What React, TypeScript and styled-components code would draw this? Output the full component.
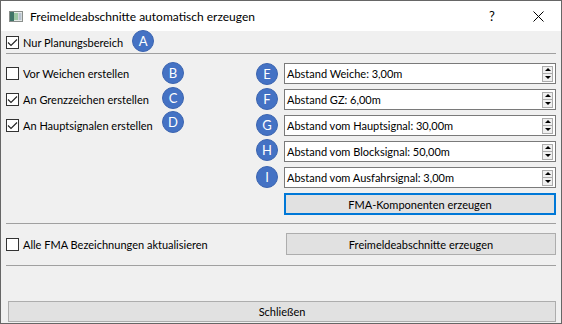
import { Fragment } from "react";
import styled, { createGlobalStyle } from "styled-components";

const GlobalStyle = createGlobalStyle`
    * { box-sizing: border-box; }
    html, body { margin: 0; padding: 0; background: #ffffff; }
    body {
        font-family: Lato, "Noto Sans", "Liberation Sans", sans-serif;
        font-size: 11px;
        color: #000000;
    }
`;

const Window = styled.div`
    width: 562px;
    height: 324px;
    border: 1px solid #666666;
    background: #f0f0f0;
    display: flex;
    flex-direction: column;
`;

const TitleBar = styled.div`
    height: 30px;
    background: #ffffff;
    display: flex;
    align-items: center;
    padding-left: 8px;
`;

const TitleText = styled.span`
    margin-left: 7px;
    flex: 1;
    font-size: 12px;
    white-space: nowrap;
`;

const CaptionButton = styled.div`
    width: 46px;
    height: 30px;
    display: flex;
    align-items: center;
    justify-content: center;
    font-size: 13px;
`;

const Body = styled.div`
    flex: 1;
    display: flex;
    flex-direction: column;
    padding: 0 5px 1px 5px;
`;

const TopRow = styled.div`
    height: 22px;
    display: flex;
    align-items: center;
`;

const Separator = styled.div`
    height: 1px;
    background: #a0a0a0;
`;

const MainGrid = styled.div`
    display: grid;
    grid-template-columns: 156px 22px 1fr 28px 272px;
    grid-template-rows: repeat(5, 21px) 22px;
    row-gap: 5px;
    padding: 9px 0 8px 0;
`;

const CheckRow = styled.label`
    display: flex;
    align-items: center;
    gap: 4px;
    white-space: nowrap;
`;

const Box = styled.span`
    width: 13px;
    height: 13px;
    border: 1px solid #333333;
    background: #ffffff;
    display: flex;
    align-items: center;
    justify-content: center;
    flex-shrink: 0;
`;

const Badge = styled.div<{ $nudge?: number; $left?: number }>`
    width: 22px;
    height: 22px;
    border-radius: 50%;
    background: #4472c4;
    border: 1px solid #3c65b0;
    color: #ffffff;
    font-size: 13px;
    display: flex;
    align-items: center;
    justify-content: center;
    align-self: center;
    margin-left: ${(p) => p.$left ?? 0}px;
    transform: translateY(${(p) => p.$nudge ?? 0}px);
`;

const SpinBox = styled.div`
    grid-column: 5;
    height: 21px;
    background: #ffffff;
    border: 1px solid #7a7a7a;
    display: flex;
    align-items: center;
    padding: 0 1px 0 2px;
`;

const SpinText = styled.span`
    flex: 1;
    white-space: nowrap;
`;

const Arrows = styled.div`
    width: 11px;
    display: flex;
    flex-direction: column;
    margin-right: 1px;
`;

const ArrowBtn = styled.div<{ $down?: boolean }>`
    height: 8px;
    border: 1px solid #acacac;
    border-top-width: ${(p) => (p.$down ? 0 : 1)}px;
    background: #f0f0f0;
    display: flex;
    align-items: center;
    justify-content: center;
    &::after {
        content: "";
        border-left: 3px solid transparent;
        border-right: 3px solid transparent;
        ${(p) =>
            p.$down
                ? "border-top: 3px solid #000;"
                : "border-bottom: 3px solid #000;"}
    }
`;

const Button = styled.div<{ $focus?: boolean }>`
    height: 22px;
    background: #e1e1e1;
    border: ${(p) => (p.$focus ? "2px solid #0078d7" : "1px solid #adadad")};
    display: flex;
    align-items: center;
    justify-content: center;
    white-space: nowrap;
`;

const BottomRow = styled.div`
    display: grid;
    grid-template-columns: 1fr 270px;
    align-items: center;
    padding: 9px 0 10px 0;
`;

const Spacer = styled.div`
    flex: 1;
`;

const CloseButton = styled(Button)`
    margin-left: 2px;
    height: 21px;
`;

const Check = ({ checked }: { checked?: boolean }) => (
    <Box>
        {checked && (
            <svg width="11" height="11" viewBox="0 0 11 11">
                <path d="M1 5.5 L4 8.5 L10 2.5" fill="none" stroke="#222" strokeWidth="1.1" />
            </svg>
        )}
    </Box>
);

const AppIcon = () => (
    <svg width="14" height="11" viewBox="0 0 14 11">
        <rect x="0.5" y="0.5" width="13" height="10" fill="#e8ecea" stroke="#8a8f8c" />
        <rect x="1" y="1" width="4" height="9" fill="#3f7468" />
        <rect x="5" y="2" width="4" height="7" fill="#9cc7a4" />
        <rect x="9.5" y="2" width="3" height="7" fill="#b8c3cf" />
    </svg>
);

const CloseIcon = () => (
    <svg width="11" height="11" viewBox="0 0 11 11">
        <path d="M0.5 0.5 L10.5 10.5 M10.5 0.5 L0.5 10.5" stroke="#000" strokeWidth="1" />
    </svg>
);

const spins = [
    { letter: "E", label: "Abstand Weiche: 3,00m", nudge: 0 },
    { letter: "F", label: "Abstand GZ: 6,00m", nudge: -1 },
    { letter: "G", label: "Abstand vom Hauptsignal: 30,00m", nudge: -1 },
    { letter: "H", label: "Abstand vom Blocksignal: 50,00m", nudge: -2 },
    { letter: "I", label: "Abstand vom Ausfahrsignal: 3,00m", nudge: -1 },
];

const checks = [
    { letter: "B", label: "Vor Weichen erstellen", checked: false, nudge: -1 },
    { letter: "C", label: "An Grenzzeichen erstellen", checked: true, nudge: -2 },
    { letter: "D", label: "An Hauptsignalen erstellen", checked: true, nudge: -4 },
];

const App = () => {
    return (
        <>
            <GlobalStyle />
            <Window>
                <TitleBar>
                    <AppIcon />
                    <TitleText>Freimeldeabschnitte automatisch erzeugen</TitleText>
                    <CaptionButton>?</CaptionButton>
                    <CaptionButton>
                        <CloseIcon />
                    </CaptionButton>
                </TitleBar>
                <Body>
                    <TopRow>
                        <CheckRow>
                            <Check checked />
                            Nur Planungsbereich
                        </CheckRow>
                        <Badge $left={9} $nudge={-1}>A</Badge>
                    </TopRow>
                    <Separator />
                    <MainGrid>
                        {checks.map((c, i) => (
                            <Fragment key={c.letter}>
                                <CheckRow style={{ gridRow: i + 1 }}>
                                    <Check checked={c.checked} />
                                    {c.label}
                                </CheckRow>
                                <Badge $nudge={c.nudge} style={{ gridRow: i + 1, gridColumn: 2 }}>
                                    {c.letter}
                                </Badge>
                            </Fragment>
                        ))}
                        {spins.map((s, i) => (
                            <Fragment key={s.letter}>
                                <Badge $nudge={s.nudge} style={{ gridRow: i + 1, gridColumn: 4 }}>
                                    {s.letter}
                                </Badge>
                                <SpinBox style={{ gridRow: i + 1 }}>
                                    <SpinText>{s.label}</SpinText>
                                    <Arrows>
                                        <ArrowBtn />
                                        <ArrowBtn $down />
                                    </Arrows>
                                </SpinBox>
                            </Fragment>
                        ))}
                        <Button $focus style={{ gridRow: 6, gridColumn: 5 }}>
                            FMA-Komponenten erzeugen
                        </Button>
                    </MainGrid>
                    <Separator />
                    <BottomRow>
                        <CheckRow>
                            <Check />
                            Alle FMA Bezeichnungen aktualisieren
                        </CheckRow>
                        <Button>Freimeldeabschnitte erzeugen</Button>
                    </BottomRow>
                    <Separator />
                    <Spacer />
                    <CloseButton>Schließen</CloseButton>
                </Body>
            </Window>
        </>
    );
};

export default App;
